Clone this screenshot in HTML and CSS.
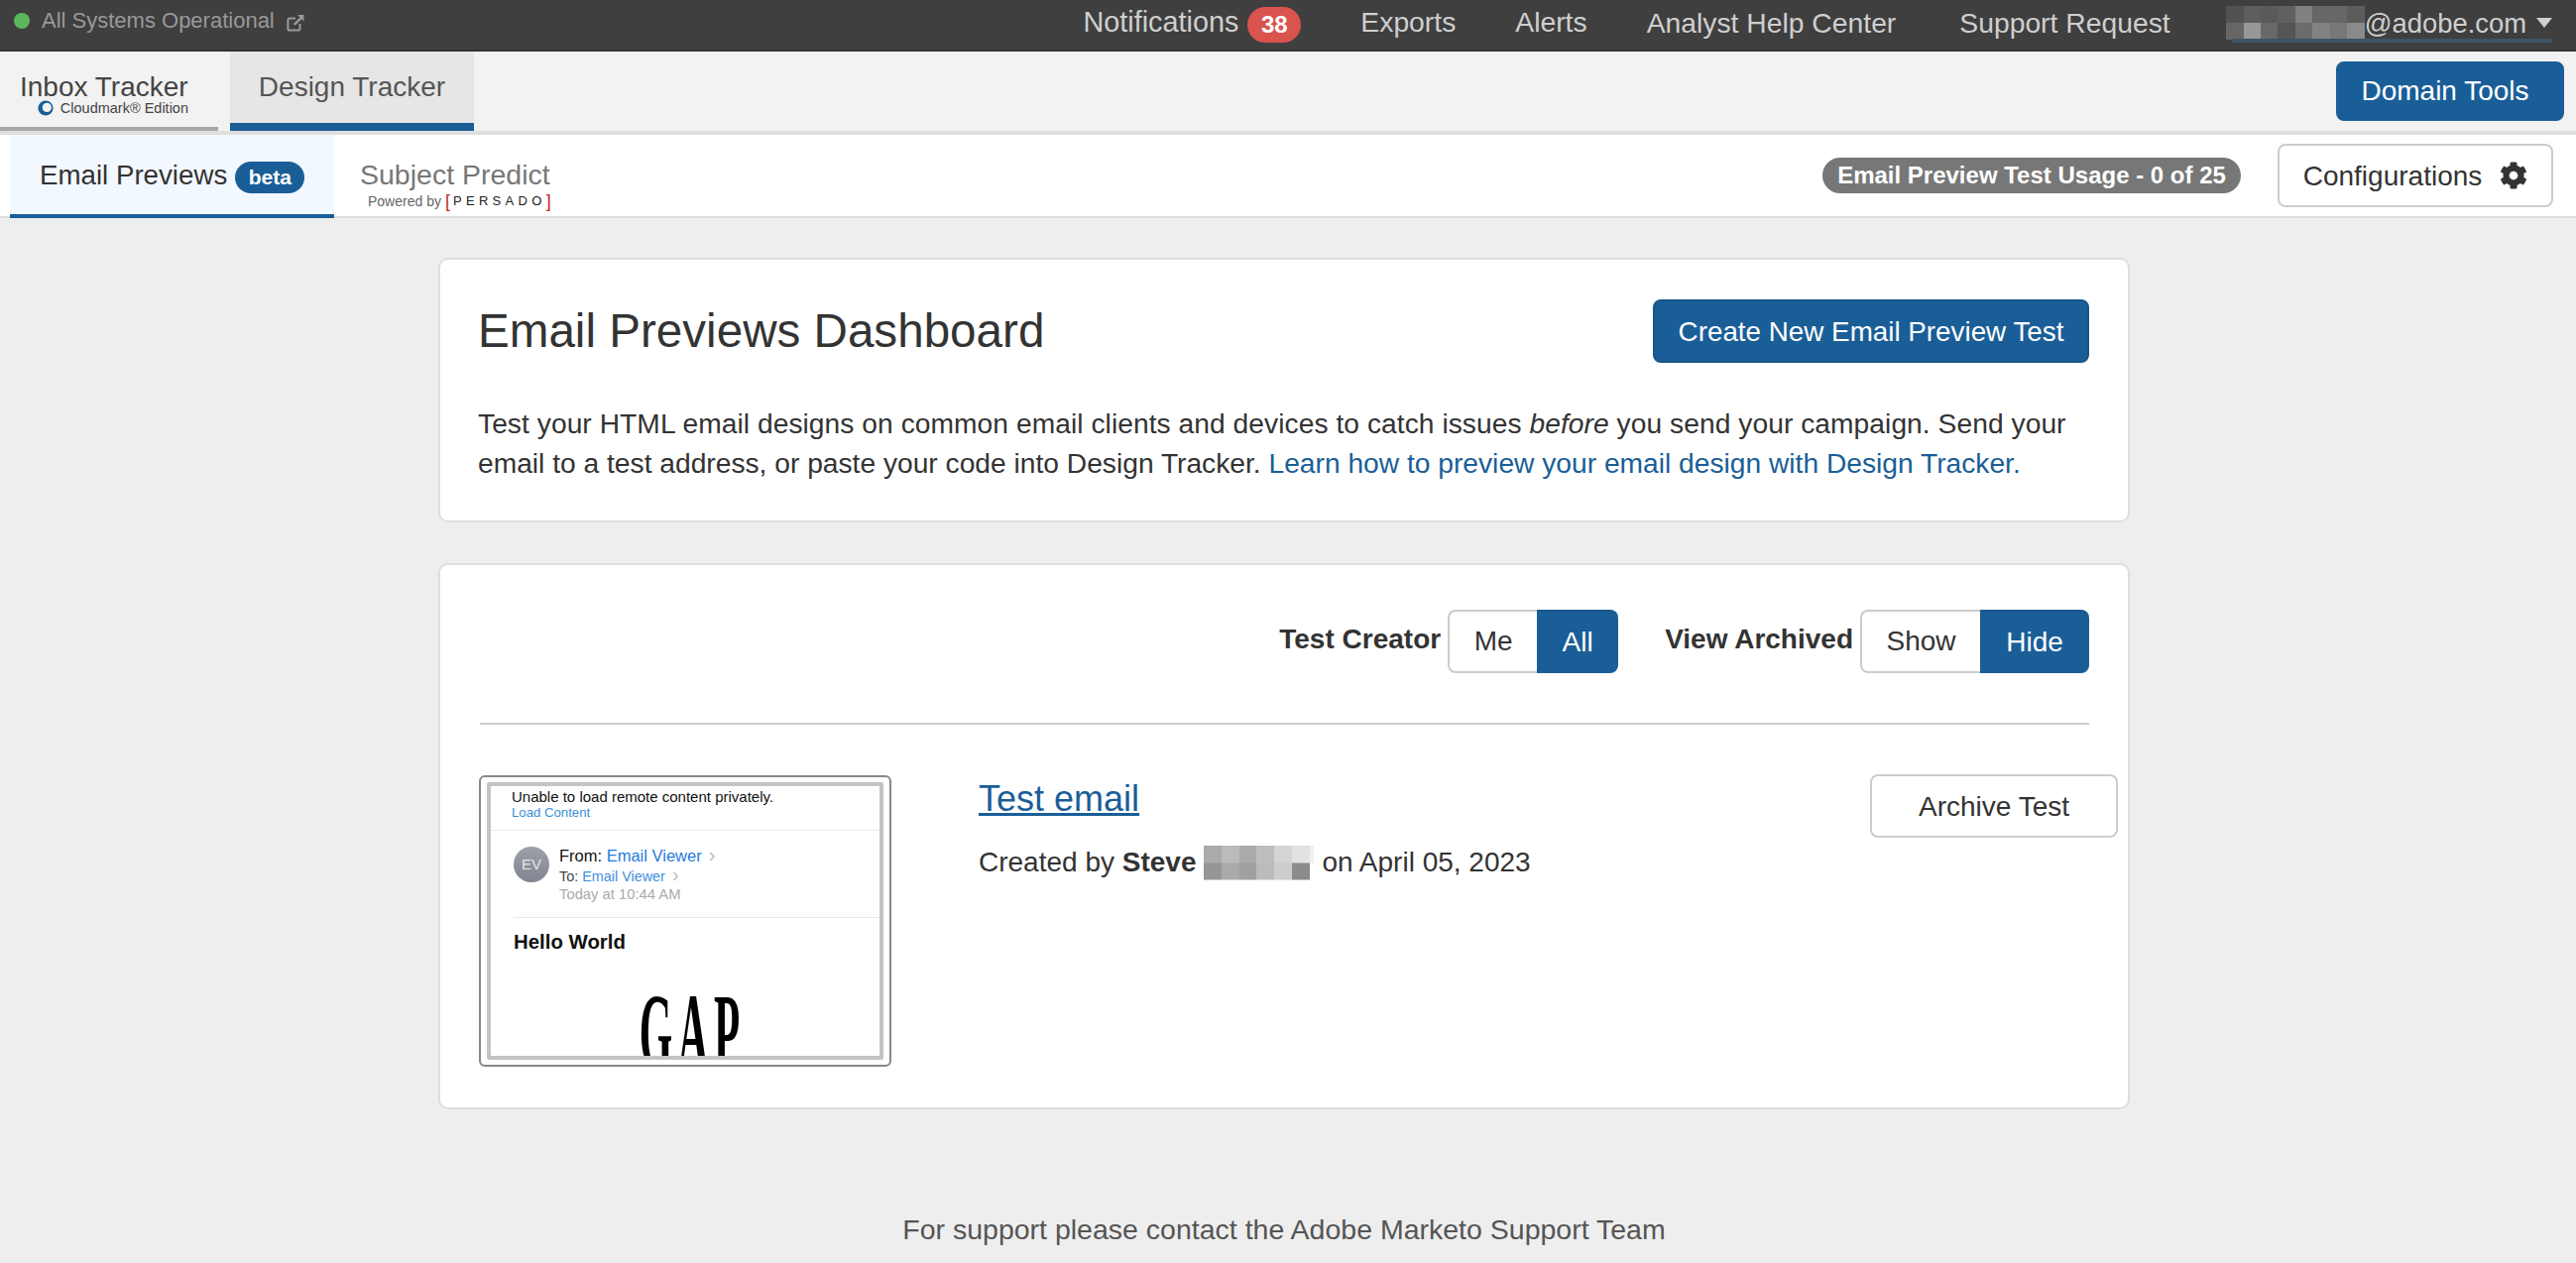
FILE: index.html
```html
<!DOCTYPE html>
<html lang="en">
<head>
<meta charset="utf-8">
<title>Email Previews Dashboard</title>
<link rel="stylesheet" href="styles.css">
</head>
<body>
<header class="topbar">
  <div class="status">
    <span class="status-dot"></span>
    <span class="status-text">All Systems Operational</span>
    <svg class="ext-icon" viewBox="0 0 18 18" aria-hidden="true"><path d="M13.5 10v5a1.6 1.6 0 0 1-1.6 1.6H3a1.6 1.6 0 0 1-1.6-1.6V6.100A1.600 1.600 0 0 1 3 4.500h6" fill="none" stroke="currentColor" stroke-width="2"/><path d="M11 1h6.500v6.500l-2.300-2.300-6.600 6.600-1.700-1.700 6.600-6.600z" fill="currentColor"/></svg>
  </div>
  <nav class="topnav">
    <a class="topnav-item nav-notify">Notifications<span class="count-badge">38</span></a>
    <a class="topnav-item">Exports</a>
    <a class="topnav-item">Alerts</a>
    <a class="topnav-item nav-help">Analyst Help Center</a>
    <a class="topnav-item nav-support">Support Request</a>
    <a class="user-menu"><span class="pixels-user"></span><span class="user-domain">@adobe.com</span><span class="caret"></span></a>
  </nav>
</header>

<div class="product-bar">
  <a class="product-tab product-inbox">
    <span class="product-name">Inbox Tracker</span>
    <span class="product-sub">
      <svg class="cm-logo" viewBox="0 0 16 16" aria-hidden="true"><circle cx="8" cy="8" r="7.600" fill="#1a5e98"/><circle cx="9.300" cy="7.400" r="4.600" fill="#f2f2f2"/></svg>Cloudmark® Edition</span>
  </a>
  <a class="product-tab product-design"><span class="product-name">Design Tracker</span></a>
  <button class="btn btn-primary btn-domain">Domain Tools</button>
</div>

<div class="sub-bar">
  <a class="sub-tab sub-tab-active">Email Previews<span class="beta-pill">beta</span></a>
  <a class="sub-tab sub-tab-predict">
    <span class="predict-name">Subject Predict</span>
    <span class="powered">Powered by<span class="persado"><i class="bracket">[</i>PERSADO<i class="bracket">]</i></span></span>
  </a>
  <span class="usage-pill">Email Preview Test Usage - 0 of 25</span>
  <button class="btn btn-default btn-config">Configurations
    <svg class="gear" viewBox="0 0 512 512" aria-hidden="true"><path fill="currentColor" d="M487.400 315.700l-42.600-24.600c4.300-23.200 4.300-47 0-70.200l42.600-24.600c4.900-2.800 7.100-8.600 5.500-14-11.100-35.600-30-67.800-54.700-94.600-3.800-4.100-10-5.100-14.800-2.300L380.800 110c-17.900-15.400-38.500-27.300-60.800-35.100V25.800c0-5.600-3.900-10.500-9.400-11.700-36.700-8.200-74.300-7.800-109.200 0-5.500 1.200-9.400 6.100-9.400 11.700V75c-22.200 7.900-42.800 19.800-60.800 35.100L88.700 85.500c-4.900-2.800-11-1.900-14.800 2.300-24.700 26.700-43.600 58.900-54.700 94.600-1.700 5.400.6 11.200 5.500 14L67.300 221c-4.300 23.200-4.300 47 0 70.200l-42.600 24.600c-4.900 2.800-7.100 8.600-5.500 14 11.100 35.600 30 67.800 54.700 94.600 3.800 4.100 10 5.100 14.800 2.300l42.600-24.600c17.900 15.400 38.500 27.300 60.800 35.100v49.200c0 5.600 3.900 10.500 9.400 11.700 36.700 8.200 74.300 7.800 109.200 0 5.500-1.200 9.400-6.100 9.400-11.700v-49.200c22.200-7.900 42.800-19.800 60.800-35.100l42.600 24.600c4.900 2.800 11 1.900 14.800-2.300 24.700-26.700 43.600-58.900 54.700-94.600 1.500-5.500-.7-11.300-5.600-14.100zM256 336c-44.100 0-80-35.900-80-80s35.900-80 80-80 80 35.900 80 80-35.900 80-80 80z"/></svg>
  </button>
</div>

<main class="main">
  <section class="card card-intro">
    <div class="intro-head">
      <h1 class="intro-title">Email Previews Dashboard</h1>
      <button class="btn btn-primary btn-create">Create New Email Preview Test</button>
    </div>
    <p class="intro-text">Test your HTML email designs on common email clients and devices to catch issues <em>before</em> you send your campaign. Send your email to a test address, or paste your code into Design Tracker. <a class="link">Learn how to preview your email design with Design Tracker.</a></p>
  </section>

  <section class="card card-tests">
    <div class="filters">
      <span class="filter-label">Test Creator</span>
      <div class="toggle toggle-creator">
        <span class="toggle-opt toggle-me">Me</span>
        <span class="toggle-opt toggle-on toggle-all">All</span>
      </div>
      <span class="filter-label filter-label-second">View Archived</span>
      <div class="toggle toggle-archived">
        <span class="toggle-opt toggle-show">Show</span>
        <span class="toggle-opt toggle-on toggle-hide">Hide</span>
      </div>
    </div>
    <hr class="divider">
    <div class="test-row">
      <div class="thumb">
        <div class="shot">
          <div class="shot-banner">
            <div class="shot-warn">Unable to load remote content privately.</div>
            <div class="shot-load">Load Content</div>
          </div>
          <div class="shot-head">
            <span class="shot-avatar">EV</span>
            <div class="shot-meta">
              <div class="shot-from">From: <span class="shot-blue">Email Viewer</span><span class="shot-chev">&rsaquo;</span></div>
              <div class="shot-to">To: <span class="shot-blue-soft">Email Viewer</span><span class="shot-chev">&rsaquo;</span></div>
              <div class="shot-date">Today at 10:44 AM</div>
            </div>
          </div>
          <div class="shot-subject">Hello World</div>
          <div class="shot-logo"><span class="shot-gap">GAP</span></div>
        </div>
      </div>
      <div class="test-info">
        <a class="test-name">Test email</a>
        <div class="test-meta">Created by <strong>Steve</strong><span class="pixels-name"></span>on April 05, 2023</div>
      </div>
      <button class="btn btn-default btn-archive">Archive Test</button>
    </div>
  </section>
</main>

<footer class="footer">For support please contact the Adobe Marketo Support Team</footer>
</body>
</html>
```
FILE: styles.css
```css
* { box-sizing: border-box; }
html, body { margin: 0; padding: 0; }
body {
  background: #eeeeee;
  color: #333333;
  font-family: "Liberation Sans", Arial, sans-serif;
  font-size: 28px;
  line-height: 40px;
  height: 1274px;
  overflow: hidden;
}
a { color: inherit; text-decoration: none; }
button { font: inherit; cursor: pointer; }

/* buttons */
.btn { padding: 0; border-radius: 8px; white-space: nowrap; }
.btn-primary { background: #1a5e98; border: 2px solid #1a5e98; color: #ffffff; }
.btn-default { background: #ffffff; border: 2px solid #cccccc; color: #333333; }

/* top bar */
.topbar {
  display: flex;
  align-items: center;
  height: 52px;
  background: #3f3f3f;
  border-bottom: 2px solid #333333;
  padding: 0 24px 0 14px;
}
.status { display: flex; align-items: center; color: #999999; font-size: 22px; padding-bottom: 8px; }
.status-dot { width: 16px; height: 16px; border-radius: 50%; background: #5cb85c; margin-right: 12px; }
.ext-icon { width: 18px; height: 18px; margin-left: 12px; margin-top: 3px; color: #999999; }
.topnav { margin-left: auto; display: flex; align-items: center; color: #cfcfcf; font-size: 28.300px; }
.topnav-item { display: flex; align-items: center; margin-right: 60px; padding-bottom: 7px; }
.nav-notify { font-size: 28.800px; }
.nav-help { margin-right: 64px; padding-bottom: 5px; }
.nav-support { margin-right: 56px; padding-bottom: 5px; }
.count-badge {
  display: flex; align-items: center; justify-content: center;
  width: 54px; height: 36px; margin-left: 9px; margin-top: 7px;
  background: #d9534f; color: #ffffff; border-radius: 18px;
  font-size: 24px; font-weight: 700;
}
.user-menu { display: flex; align-items: center; position: relative; height: 50px; }
.user-menu::after {
  content: ""; position: absolute; left: 6px; right: 0; top: 39px; height: 4px;
  background: #3f5364;
}
.user-domain { position: relative; z-index: 1; padding-bottom: 2px; font-size: 27.400px; }
.pixels-user {
  width: 140px; height: 34px; margin-top: -4px;
  background:
    linear-gradient(90deg, #525252 0 12.5%, #5e5e5e 0 25%, #5a5a5a 0 37.5%, #606060 0 50%, #808080 0 62.5%, #676767 0 75%, #676767 0 87.5%, #5c5c5c 0) top / 100% 50% no-repeat,
    linear-gradient(90deg, #666666 0 12.5%, #979797 0 25%, #686868 0 37.5%, #555555 0 50%, #6c6c6c 0 62.5%, #828282 0 75%, #777777 0 87.5%, #8a8a8a 0) bottom / 100% 50% no-repeat;
}
.caret {
  width: 0; height: 0; margin-left: 10px; margin-top: -4px;
  border-left: 8.500px solid transparent; border-right: 8.500px solid transparent;
  border-top: 10px solid #cfcfcf;
}

/* product bar */
.product-bar {
  display: flex; height: 84px;
  background: #f2f2f2;
  border-bottom: 4px solid #dedede;
}
.product-tab { display: flex; flex-direction: column; color: #555555; }
.product-inbox {
  width: 220px; padding-left: 20px; margin-right: 12px;
  border-bottom: 4px solid #a6a6a6; color: #444444;
  padding-top: 16px;
}
.product-design {
  width: 246px; align-items: center; background: #e6e6e6;
  border-bottom: 8px solid #1a5e98; padding-top: 16px;
}
.product-name { line-height: 40px; height: 40px; }
.product-sub { display: flex; align-items: center; justify-content: flex-end; font-size: 14.500px; line-height: 16px; padding-right: 30px; margin-top: -7px; color: #444444; white-space: nowrap; }
.cm-logo { width: 16px; height: 16px; margin-right: 7px; flex: none; }
.btn-domain { margin-left: auto; margin-right: 12px; margin-top: 10px; width: 230px; height: 60px; padding-right: 10px; }

/* sub bar */
.sub-bar {
  display: flex; align-items: flex-start; height: 84px;
  background: #ffffff;
  border-bottom: 2px solid #dedede;
  padding-left: 10px;
}
.sub-tab { display: flex; height: 84px; }
.sub-tab-active {
  width: 327px; padding: 21px 0 0 30px; background: #f2f8ff; font-size: 27.700px;
  border-bottom: 4px solid #1a5e98; color: #333333;
}
.beta-pill {
  display: flex; align-items: center; justify-content: center;
  width: 70px; height: 32px; margin: 6px 0 0 8px;
  background: #1a5e98; border-radius: 16px;
  color: #ffffff; font-size: 21px; font-weight: 700;
}
.sub-tab-predict { flex-direction: column; padding: 20px 0 0 26px; color: #777777; font-size: 28.500px; }
.predict-name { height: 40px; line-height: 40px; }
.powered { display: flex; align-items: center; font-size: 14px; line-height: 16px; margin: -1px 0 0 8px; color: #666666; white-space: nowrap; }
.persado { display: flex; align-items: center; margin-left: 4px; color: #222222; font-size: 13px; letter-spacing: 4.300px; }
.bracket { color: #c4282d; font-style: normal; font-size: 18px; letter-spacing: 3px; }
.bracket:last-child { letter-spacing: 0; }
.usage-pill {
  margin: 23px 0 0 auto;
  display: flex; align-items: center; justify-content: center;
  width: 422px; height: 36px; border-radius: 18px; white-space: nowrap;
  background: #777777; color: #ffffff; font-size: 24px; font-weight: 700;
}
.btn-config {
  display: flex; align-items: center; justify-content: center;
  width: 278px; height: 64px; margin: 9px 23px 0 37px; padding-top: 2px;
}
.gear { width: 28px; height: 28px; margin-left: 18px; margin-top: -2px; color: #333333; }

/* main */
.main { width: 1706px; margin: 40px 0 0 442px; }
.card { background: #ffffff; border: 2px solid #dedede; border-radius: 10px; padding: 40px; }
.card-intro { height: 267px; padding-left: 38px; padding-right: 39px; }
.intro-head { display: flex; justify-content: space-between; align-items: center; height: 64px; }
.intro-title { margin: 0; font-size: 47.600px; font-weight: 400; line-height: 64px; }
.btn-create { width: 440px; height: 64px; border-color: #195587; font-size: 27.800px; padding-top: 2px; }
.intro-text { margin: 41px 0 0; font-size: 28.200px; }
.intro-text::first-line { letter-spacing: .05px; }
.link { color: #1a5e98; }

.card-tests { margin-top: 41px; height: 551px; padding: 45px 39px 0 40px; }
.filters { display: flex; justify-content: flex-end; align-items: center; }
.filter-label { font-weight: 700; margin-right: 7px; padding-bottom: 4px; }
.filter-label-second { margin-left: 47px; }
.toggle { display: flex; height: 64px; }
.toggle-opt {
  display: flex; align-items: center; justify-content: center;
  background: #ffffff; border: 2px solid #cccccc; border-right: 0; color: #333333;
  border-radius: 8px 0 0 8px;
}
.toggle-on { background: #1a5e98; border: 0; border-top: 2px solid #1d5a8e; color: #ffffff; border-radius: 0 8px 8px 0; }
.toggle-me { width: 90px; }
.toggle-all { width: 82px; }
.toggle-show { width: 121px; }
.toggle-hide { width: 110px; }
.divider { border: 0; border-top: 2px solid #cccccc; margin: 50px 0; height: 0; }

.test-row { display: flex; align-items: flex-start; margin-left: -1px; }
.thumb {
  flex: none; width: 416px; height: 294px; margin-top: 1px;
  border: 2px solid #888888; border-radius: 6px;
  padding: 5px 6px;
}
.shot { height: 100%; border: 4px solid #c4c4c4; border-radius: 2px; overflow: hidden; background: #ffffff; color: #111111; font-size: 14px; line-height: 16px; }
.shot-banner { height: 45px; border-bottom: 1.500px solid #ececec; padding: 3px 0 0 21px; }
.shot-warn { font-size: 15px; }
.shot-load { color: #3a8fd8; font-size: 13.200px; }
.shot-head { display: flex; height: 88px; margin-left: 23px; border-bottom: 1.500px solid #e8e8e8; padding-top: 16px; }
.shot-avatar {
  display: flex; align-items: center; justify-content: center;
  width: 36px; height: 36px; border-radius: 50%; background: linear-gradient(#9da0aa, #82858f); color: #e4e4e8; font-size: 15px; flex: none;
}
.shot-meta { margin-left: 10px; margin-top: -2px; }
.shot-from, .shot-to, .shot-date { height: 20px; line-height: 20px; white-space: nowrap; }
.shot-from { font-size: 16.500px; }
.shot-to { font-size: 14.400px; color: #444444; }
.shot-date { font-size: 14.800px; color: #aaaaaa; }
.shot-blue { color: #1f7ae0; }
.shot-blue-soft { color: #3f8fe0; }
.shot-chev { color: #bbbbbb; margin-left: 7px; font-size: 20px; }
.shot-subject { margin: 12px 0 0 23px; font-size: 20.400px; line-height: 24px; font-weight: 700; color: #111111; }
.shot-logo { height: 60px; margin-top: 32px; display: flex; justify-content: center; position: relative; }
.shot-gap {
  display: inline-block; font-family: "Liberation Serif", serif; font-weight: 700; font-size: 110px; line-height: 80px; color: #000000;
  transform: scaleX(.39); letter-spacing: 14px; margin-left: 14px; margin-top: 7px;
}
.test-info { flex: 1; margin-left: 88px; }
.test-name { display: inline-block; color: #1a5e98; font-size: 36px; line-height: 50px; text-decoration: underline; }
.test-meta { display: flex; align-items: center; margin-top: 19px; white-space: pre; }
.pixels-name {
  width: 111px; height: 35px; margin: 0 8px;
  background:
    linear-gradient(90deg, #aaaaaa 0 16%, #bbbbbb 0 32%, #aaaaaa 0 48%, #bebebe 0 64%, #d4d4d4 0 80%, #e2e2e2 0 96%, #f0f0f0 0) top / 100% 50% no-repeat,
    linear-gradient(90deg, #969696 0 16%, #aaaaaa 0 32%, #a0a0a0 0 48%, #bbbbbb 0 64%, #cccccc 0 80%, #8c8c8c 0 96%, #ffffff 0) bottom / 100% 50% no-repeat;
}
.btn-archive { flex: none; width: 250px; height: 64px; margin: 0 -29px 0 0; padding-top: 2px; }

.footer { text-align: center; color: #555555; margin-top: 101px; font-size: 28.500px; transform: translateX(-4px); }
```
